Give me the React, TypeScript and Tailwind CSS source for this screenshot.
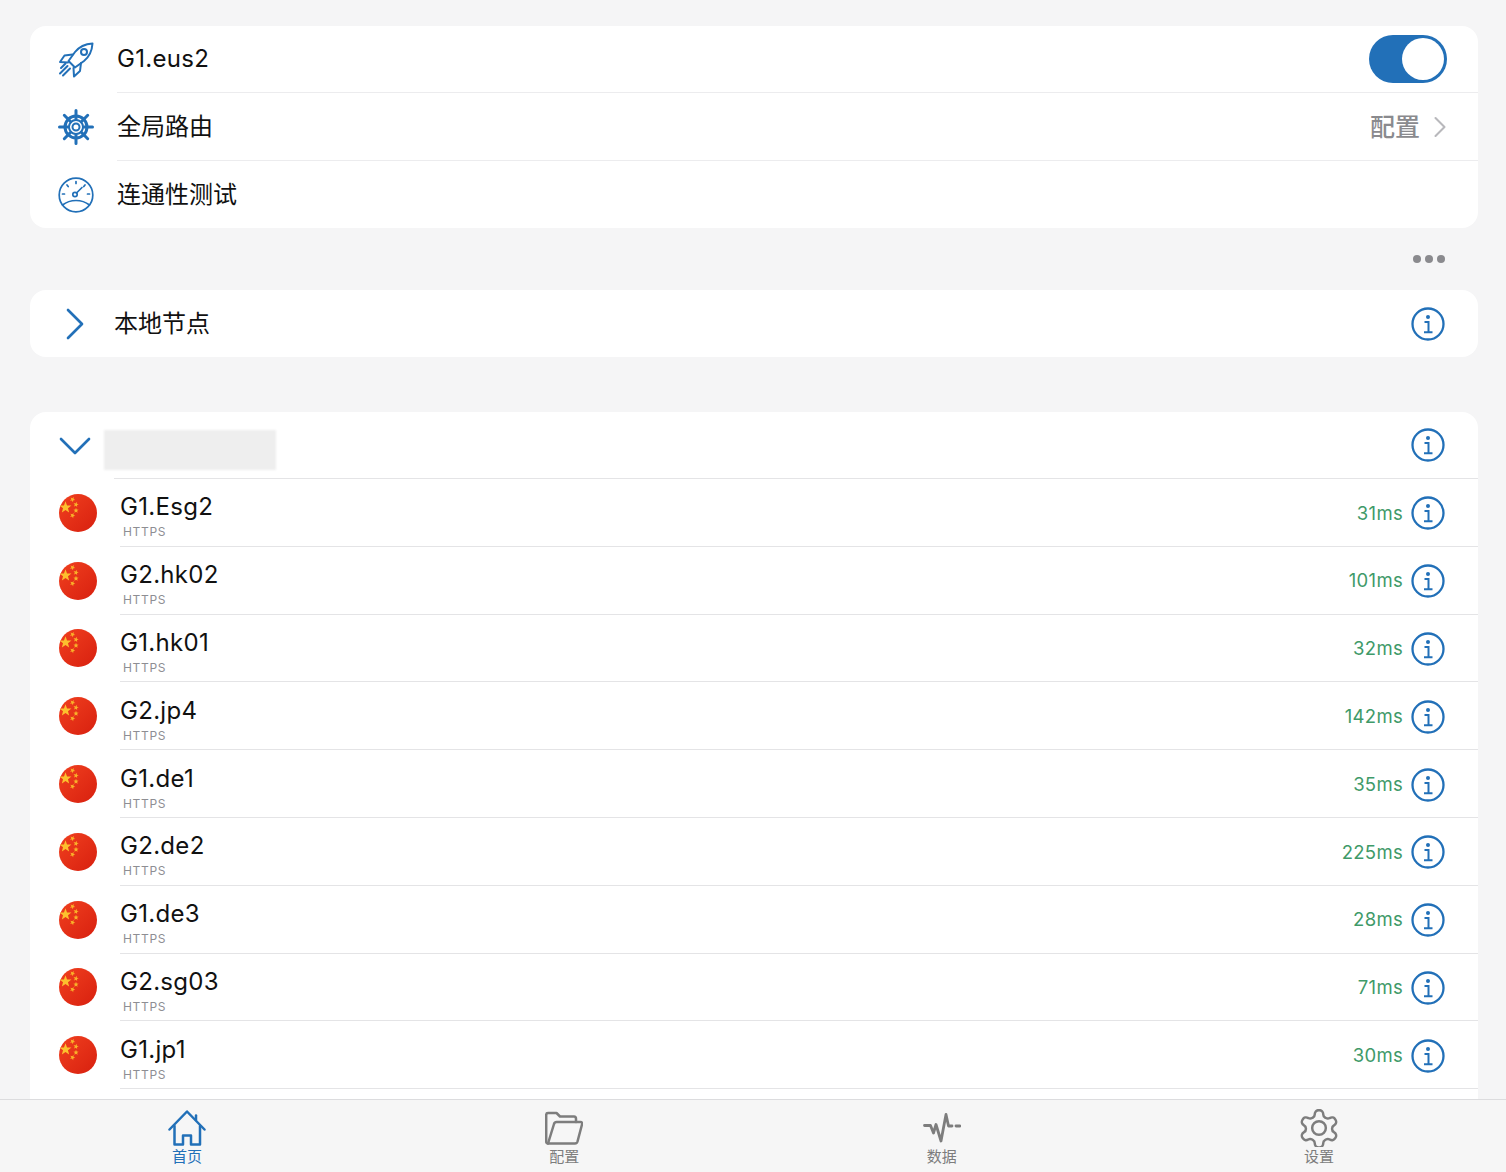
import React from 'react';
import { ChevronRight, ChevronDown } from 'lucide-react';

const FONT = "font-['Inter','Noto_Sans_CJK_SC',sans-serif]";

const nodes = [
  { name: 'G1.Esg2', ms: 31 },
  { name: 'G2.hk02', ms: 101 },
  { name: 'G1.hk01', ms: 32 },
  { name: 'G2.jp4', ms: 142 },
  { name: 'G1.de1', ms: 35 },
  { name: 'G2.de2', ms: 225 },
  { name: 'G1.de3', ms: 28 },
  { name: 'G2.sg03', ms: 71 },
  { name: 'G1.jp1', ms: 30 },
];

const RocketIcon = () => (
  <svg width="36" height="36" viewBox="0 0 36 36" fill="none" stroke="#2270b8" strokeWidth="2" strokeLinejoin="round" strokeLinecap="round">
    <path d="M34.500 1.500C27 2 21 5 17 10L10.500 19l6.500 6.500 9-6.500C31 15 34 9 34.500 1.500Z" />
    <circle cx="26" cy="10" r="3" />
    <path d="M14.500 12.500 6.500 13.500 2 20l8 .5" />
    <path d="M23 21 22 29 16 34.500 15.500 26" />
    <path d="M9.500 24 2 31.500M12 26.500 5 33.500M7.500 21.500 3 26" />
  </svg>
);

const WheelIcon = () => (
  <svg width="36" height="36" viewBox="0 0 36 36" fill="none" stroke="#2270b8" strokeLinecap="round">
    <circle cx="18" cy="18" r="11" strokeWidth="3" />
    <circle cx="18" cy="18" r="7" strokeWidth="2" />
    <circle cx="18" cy="18" r="3.500" strokeWidth="2" />
    <path strokeWidth="3" d="M18 1.500v9M18 25.500v9M1.500 18h9M25.500 18h9M6.300 6.300l6.400 6.400M23.300 23.300l6.400 6.400M29.700 6.300l-6.400 6.400M12.700 23.300l-6.400 6.400" />
  </svg>
);

const GaugeIcon = () => (
  <svg width="36" height="36" viewBox="0 0 36 36" fill="none" stroke="#2270b8" strokeWidth="1.700" strokeLinecap="round">
    <circle cx="18" cy="18" r="16.800" />
    <path d="M4.500 28C9 24.500 13 23.500 18 23.500S27 24.500 31.500 28" />
    <circle cx="17" cy="17.500" r="2.200" />
    <path d="M18.500 16 24 10.500M18 4.500v2M9 8l1.200 1.500M27 8l-1.200 1.500M4.500 17h2M29.500 17h2" />
  </svg>
);

const InfoIcon = () => (
  <svg width="34" height="34" viewBox="0 0 34 34" fill="none" stroke="#2270b8" className="shrink-0">
    <circle cx="17" cy="17" r="15.500" strokeWidth="2.300" />
    <circle cx="17" cy="10" r="2" fill="#2270b8" stroke="none" />
    <path strokeWidth="2" d="M13.500 15H17.500V25M13 25.200H21.500" />
  </svg>
);

// five point star, used for the flag only
const star = (cx: number, cy: number, r: number, rot = 0) => {
  const pts: string[] = [];
  for (let i = 0; i < 10; i++) {
    const rad = i % 2 === 0 ? r : r * 0.42;
    const a = rot - Math.PI / 2 + (i * Math.PI) / 5;
    pts.push(`${(cx + rad * Math.cos(a)).toFixed(2)},${(cy + rad * Math.sin(a)).toFixed(2)}`);
  }
  return pts.join(' ');
};

const Flag = () => (
  <svg width="38" height="38" viewBox="0 0 38 38" className="shrink-0">
    <defs>
      <linearGradient id="flagRed" x1="0" y1="0" x2="1" y2="1">
        <stop offset="0" stopColor="#f0401f" />
        <stop offset="1" stopColor="#d8200f" />
      </linearGradient>
    </defs>
    <circle cx="19" cy="19" r="19" fill="url(#flagRed)" />
    <polygon fill="#fcc02e" points={star(6.500, 13.500, 6.200)} />
    <polygon fill="#f9b32a" points={star(13.500, 5.500, 2.800, 0.5)} />
    <polygon fill="#f9b32a" points={star(17, 10.500, 2.800, 0.2)} />
    <polygon fill="#f9b32a" points={star(17, 16.500, 2.800)} />
    <polygon fill="#f9b32a" points={star(13.500, 21.500, 2.800, 0.4)} />
  </svg>
);

const HomeIcon = () => (
  <svg width="38" height="36" viewBox="0 0 38 36" fill="none" stroke="#2270b8" strokeWidth="2.500" strokeLinecap="round" strokeLinejoin="round">
    <path d="M1.500 19.500 19 1.500 36.500 19.500" />
    <path d="M28 10V5.500" />
    <path d="M6.500 16V34.500H15V25.500H23V34.500H32V16" />
  </svg>
);

const FolderIcon = () => (
  <svg width="38" height="34" viewBox="0 0 38 34" fill="none" stroke="#7d7d7d" strokeWidth="2.500" strokeLinejoin="round" strokeLinecap="round">
    <path d="M3 32.500C1.800 32.500 1.200 31.700 1.200 30.500V4C1.200 2.800 1.800 2 3 2H11.500L15 5.500H29C30.500 5.500 31 6.500 31 8V11" />
    <path d="M3 32.500 9 13C9.400 11.800 10 11 11.500 11H35.500C37 11 37.500 12 37 13.500L32.500 30.500C32.100 31.800 31.300 32.500 30 32.500Z" />
  </svg>
);

const PulseIcon = () => (
  <svg width="38" height="30" viewBox="0 0 38 30" fill="none" stroke="#7d7d7d" strokeWidth="2.800" strokeLinejoin="round" strokeLinecap="round">
    <path d="M1.500 12.500H7.500L10.500 20 13 11.500 18 28 23 1.500 25.500 13H29" />
    <path d="M33 13H37" />
  </svg>
);

const GearIcon = () => (
  <svg width="38" height="38" viewBox="2 2 20 20" fill="none" stroke="#7d7d7d" strokeWidth="1.300" strokeLinejoin="round" strokeLinecap="round">
    <path d="M12.220 2.600h-.44a2 2 0 0 0-2 2v.18a2 2 0 0 1-1 1.730l-.43.250a2 2 0 0 1-2 0l-.15-.080a2 2 0 0 0-2.730.730l-.220.380a2 2 0 0 0 .730 2.730l.150.100a2 2 0 0 1 1 1.720v.110a2 2 0 0 1-1 1.740l-.150.090a2 2 0 0 0-.730 2.730l.220.380a2 2 0 0 0 2.730.730l.150-.080a2 2 0 0 1 2 0l.430.250a2 2 0 0 1 1 1.730v.180a2 2 0 0 0 2 2h.44a2 2 0 0 0 2-2v-.18a2 2 0 0 1 1-1.730l.43-.250a2 2 0 0 1 2 0l.150.080a2 2 0 0 0 2.730-.730l.220-.390a2 2 0 0 0-.730-2.730l-.150-.080a2 2 0 0 1-1-1.740v-.100a2 2 0 0 1 1-1.740l.150-.090a2 2 0 0 0 .730-2.730l-.220-.380a2 2 0 0 0-2.730-.730l-.150.080a2 2 0 0 1-2 0l-.430-.250a2 2 0 0 1-1-1.730V4.600a2 2 0 0 0-2-2z" />
    <circle cx="12" cy="12" r="3.600" />
  </svg>
);

const NodeRow = ({ name, ms }: { name: string; ms: number }) => (
  <div className="flex h-[67.8px] items-center pl-[29px]">
    <Flag />
    <div className="ml-[23px] flex h-full flex-1 items-center justify-between border-b border-[#e4e4e6] pr-[33px]">
      <div className="flex flex-col pt-[8px]">
        <span className="text-[24px] leading-[30px] tracking-[0.3px] text-[#111]">{name}</span>
        <span className="mt-[2px] ml-[3px] text-[12px] leading-[16px] tracking-[0.7px] text-[#8e8e93]">HTTPS</span>
      </div>
      <div className="flex items-center gap-[8px] pt-[2px]">
        <span className="text-[18.500px] tracking-[0.3px] text-[#3f9a69]">{ms}ms</span>
        <InfoIcon />
      </div>
    </div>
  </div>
);

const TabItem = ({ label, icon, active }: { label: string; icon: React.ReactNode; active?: boolean }) => (
  <div className="flex w-[38px] flex-col items-center">
    <div className="flex h-[38px] items-center justify-center">{icon}</div>
    <span className={`text-[15px] leading-[19px] whitespace-nowrap ${active ? 'text-[#2270b8]' : 'text-[#7d7d7d]'}`}>{label}</span>
  </div>
);

export default function App() {
  return (
    <div className={`flex h-[1172px] w-[1506px] flex-col overflow-hidden bg-[#f5f5f6] ${FONT}`}>
      <main className="flex min-h-0 flex-1 flex-col pt-[26px] pr-[28px] pl-[30px]">
        <section className="rounded-[16px] bg-white">
          <div className="flex h-[67px] items-center pl-[28px]">
            <RocketIcon />
            <div className="ml-[23px] flex h-full flex-1 items-center justify-between border-b border-[#ececee] pr-[31px]">
              <span className="text-[24px] tracking-[0.3px] text-[#111]">G1.eus2</span>
              <div className="flex h-[48px] w-[78px] justify-end rounded-full bg-[#2270b8] p-[3px]">
                <div className="h-[42px] w-[42px] rounded-full bg-white" />
              </div>
            </div>
          </div>
          <div className="flex h-[68px] items-center pl-[28px]">
            <WheelIcon />
            <div className="ml-[23px] flex h-full flex-1 items-center justify-between border-b border-[#ececee] pr-[28px]">
              <span className="text-[24px] text-[#111]">全局路由</span>
              <div className="flex items-center text-[#8a8a8e]">
                <span className="pt-[2px] text-[25px] font-medium">配置</span>
                <ChevronRight size={36} strokeWidth={1.400} className="-mr-[8px] ml-[2px] text-[#b8b8bc]" />
              </div>
            </div>
          </div>
          <div className="flex h-[67px] items-center pl-[28px]">
            <GaugeIcon />
            <span className="ml-[23px] text-[24px] text-[#111]">连通性测试</span>
          </div>
        </section>

        <div className="flex h-[62px] items-center justify-end gap-[4px] pr-[33px]">
          <span className="h-[8px] w-[8px] rounded-full bg-[#8a8a8e]" />
          <span className="h-[8px] w-[8px] rounded-full bg-[#8a8a8e]" />
          <span className="h-[8px] w-[8px] rounded-full bg-[#8a8a8e]" />
        </div>

        <section className="flex h-[67px] items-center justify-between rounded-[16px] bg-white pr-[33px] pl-[17px]">
          <div className="flex items-center">
            <ChevronRight size={56} strokeWidth={1.150} className="text-[#2270b8]" />
            <span className="ml-[11px] text-[24px] text-[#111]">本地节点</span>
          </div>
          <InfoIcon />
        </section>

        <section className="mt-[55px] min-h-0 flex-1 overflow-hidden rounded-t-[16px] bg-white">
          <div className="flex h-[67px] items-center pl-[17px]">
            <ChevronDown size={56} strokeWidth={1.150} className="shrink-0 text-[#2270b8]" />
            <div className="ml-[11px] flex h-full flex-1 items-center justify-between border-b border-[#e4e4e6] pr-[33px]">
              <div className="mt-[10px] -ml-[10px] h-[40px] w-[172px] bg-[#eeeeee] blur-[1px]" />
              <InfoIcon />
            </div>
          </div>
          {nodes.map(n => (
            <NodeRow key={n.name} name={n.name} ms={n.ms} />
          ))}
        </section>
      </main>

      <nav className="flex h-[73px] shrink-0 justify-between border-t border-[#dcdcde] bg-[#f6f6f6] px-[168px] pt-[9px]">
        <TabItem label="首页" icon={<HomeIcon />} active />
        <TabItem label="配置" icon={<FolderIcon />} />
        <TabItem label="数据" icon={<PulseIcon />} />
        <TabItem label="设置" icon={<GearIcon />} />
      </nav>
    </div>
  );
}
